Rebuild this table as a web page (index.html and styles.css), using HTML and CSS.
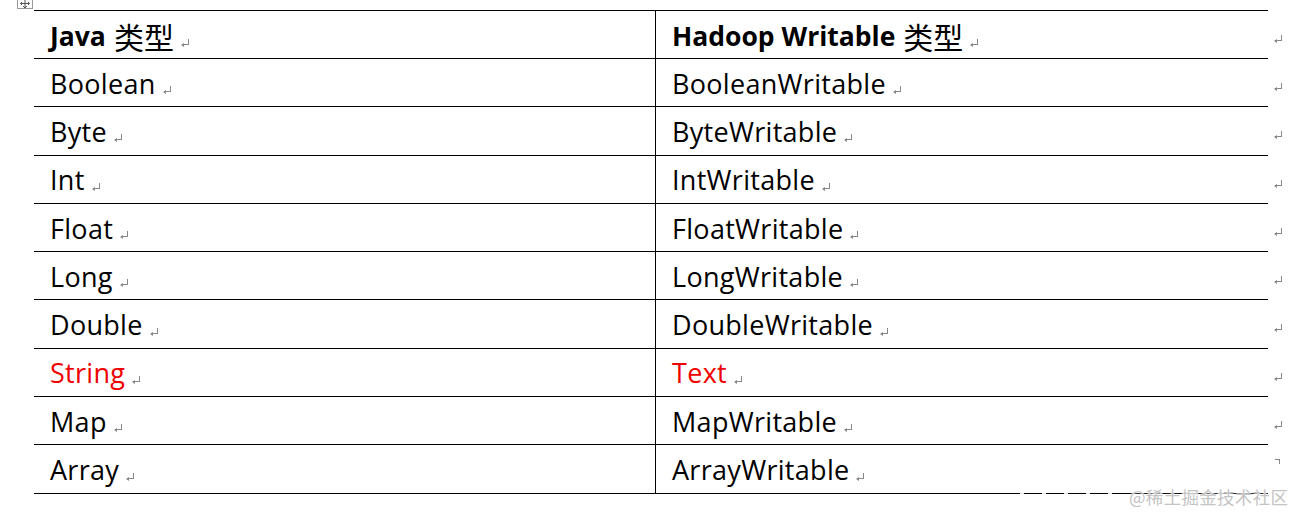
FILE: index.html
```html
<!DOCTYPE html>
<html lang="zh">
<head>
<meta charset="utf-8">
<title>Java / Hadoop Writable</title>
<link rel="stylesheet" href="styles.css">
</head>
<body>
<div class="page">
  <div class="handle">
    <svg width="16" height="9" viewBox="0 0 16 9"><rect x="0.5" y="-2" width="15" height="10.5" fill="#fff" stroke="#9a9a9a"/><path d="M8 0v7M4 3.5h8M6 6l2 2 2-2M5 2l-1.5 1.5L5 5M11 2l1.5 1.5L11 5" stroke="#555" fill="none" stroke-width="1"/></svg>
  </div>
  <div class="table">
    <div class="row head">
      <div class="cell c1"><b>Java</b>&nbsp;<span class="cjk">类型</span><i class="rm"></i></div>
      <div class="cell c2"><b>Hadoop Writable</b>&nbsp;<span class="cjk">类型</span><i class="rm"></i></div>
      <i class="rm end"></i>
    </div>
    <div class="row"><div class="cell c1">Boolean<i class="rm"></i></div><div class="cell c2">BooleanWritable<i class="rm"></i></div><i class="rm end"></i></div>
    <div class="row"><div class="cell c1">Byte<i class="rm"></i></div><div class="cell c2">ByteWritable<i class="rm"></i></div><i class="rm end"></i></div>
    <div class="row"><div class="cell c1">Int<i class="rm"></i></div><div class="cell c2">IntWritable<i class="rm"></i></div><i class="rm end"></i></div>
    <div class="row"><div class="cell c1">Float<i class="rm"></i></div><div class="cell c2">FloatWritable<i class="rm"></i></div><i class="rm end"></i></div>
    <div class="row"><div class="cell c1">Long<i class="rm"></i></div><div class="cell c2">LongWritable<i class="rm"></i></div><i class="rm end"></i></div>
    <div class="row"><div class="cell c1">Double<i class="rm"></i></div><div class="cell c2">DoubleWritable<i class="rm"></i></div><i class="rm end"></i></div>
    <div class="row red"><div class="cell c1">String<i class="rm"></i></div><div class="cell c2">Text<i class="rm"></i></div><i class="rm end"></i></div>
    <div class="row"><div class="cell c1">Map<i class="rm"></i></div><div class="cell c2">MapWritable<i class="rm"></i></div><i class="rm end"></i></div>
    <div class="row last"><div class="cell c1">Array<i class="rm"></i></div><div class="cell c2">ArrayWritable<i class="rm"></i></div><i class="rm corner"></i></div>
  </div>
  <div class="gaps"></div>
  <div class="watermark">@稀土掘金技术社区</div>
</div>
</body>
</html>
```
FILE: styles.css
```css
html, body {
  margin: 0;
  padding: 0;
  background: #fff;
}
.page {
  position: relative;
  width: 1296px;
  height: 513px;
  overflow: hidden;
  font-family: "Open Sans", "Noto Sans", sans-serif;
  color: #000;
}
.handle {
  position: absolute;
  left: 17px;
  top: 0;
  line-height: 0;
}
.table {
  position: absolute;
  left: 34px;
  top: 10px;
  width: 1234px;
  border-top: 1px solid #000;
}
.row {
  position: relative;
  display: flex;
  height: 47.3px;
  border-bottom: 1px solid #000;
  font-size: 27px;
  letter-spacing: 0.3px;
}
.row.head {
  height: 47px;
  letter-spacing: 0;
}
.cell {
  display: flex;
  align-items: center;
  box-sizing: border-box;
  padding-top: 1px;
  white-space: nowrap;
}
.c1 {
  width: 622px;
  padding-left: 16px;
  border-right: 1px solid #000;
}
.c2 {
  flex: 1;
  padding-left: 16px;
}
.head .cell {
  padding-top: 3px;
}
.head b {
  font-weight: 700;
  font-size: 26.5px;
}
.cjk {
  font-family: "Noto Sans CJK SC", sans-serif;
  font-weight: 400;
  font-size: 30px;
  margin-left: 1px;
}
.red .cell {
  color: #ee0000;
}
.rm {
  display: inline-block;
  width: 7px;
  height: 6px;
  margin-left: 8px;
  margin-top: 12px;
  border-right: 1px solid #888;
  border-bottom: 1px solid #888;
  position: relative;
  box-sizing: border-box;
}
.rm::before {
  content: "";
  position: absolute;
  left: -1px;
  bottom: -3px;
  border-top: 2.5px solid transparent;
  border-bottom: 2.5px solid transparent;
  border-right: 3px solid #888;
}
.rm.end, .rm.corner {
  position: absolute;
  left: 1241px;
  top: 24px;
  margin: 0;
}
.rm.corner {
  top: 14px;
  width: 5px;
  height: 5px;
  border-bottom: none;
  border-top: 1px solid #888;
}
.rm.corner::before {
  display: none;
}
.gaps {
  position: absolute;
  left: 1020px;
  top: 490px;
  width: 110px;
  height: 8px;
  background: repeating-linear-gradient(90deg, rgba(255,255,255,0.9) 0 4px, transparent 4px 22px);
}
.watermark {
  position: absolute;
  left: 1129px;
  top: 484px;
  font-family: "Noto Sans CJK SC", sans-serif;
  font-size: 17.5px;
  color: #c4c4c4;
  letter-spacing: 0.3px;
  text-shadow: 0 0 2px #fff, 0 0 2px #fff;
}
```
